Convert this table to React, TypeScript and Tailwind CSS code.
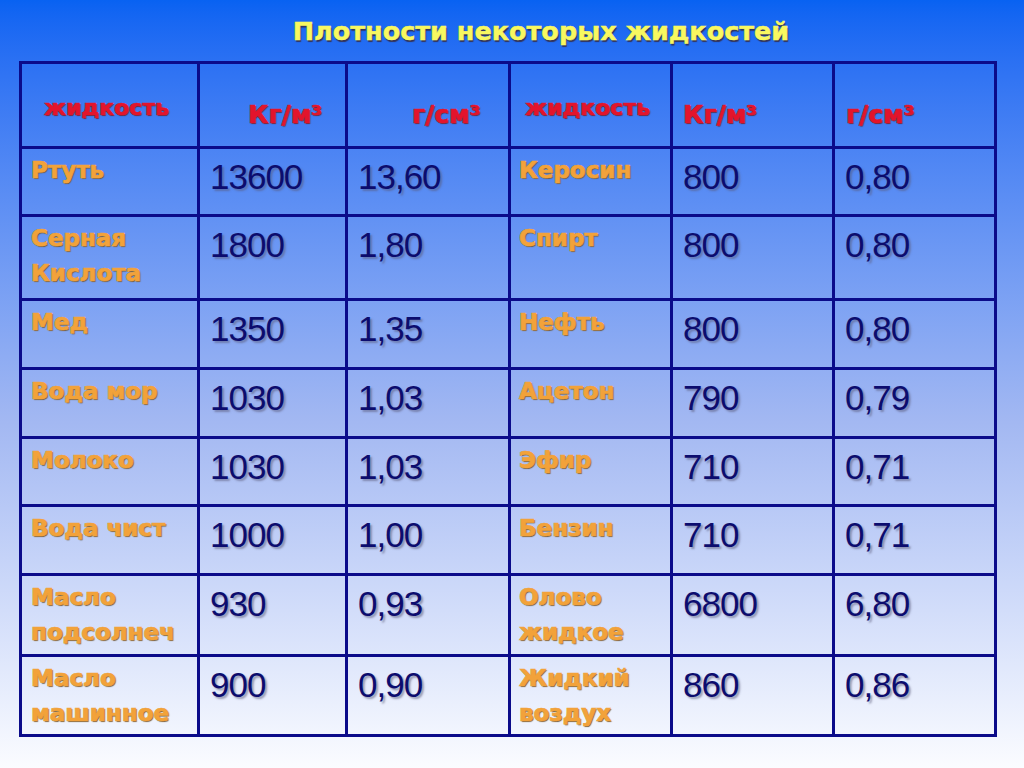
const rows = [
  ['Ртуть', '13600', '13,60', 'Керосин', '800', '0,80'],
  ['Серная Кислота', '1800', '1,80', 'Спирт', '800', '0,80'],
  ['Мед', '1350', '1,35', 'Нефть', '800', '0,80'],
  ['Вода мор', '1030', '1,03', 'Ацетон', '790', '0,79'],
  ['Молоко', '1030', '1,03', 'Эфир', '710', '0,71'],
  ['Вода чист', '1000', '1,00', 'Бензин', '710', '0,71'],
  ['Масло подсолнеч', '930', '0,93', 'Олово жидкое', '6800', '6,80'],
  ['Масло машинное', '900', '0,90', 'Жидкий воздух', '860', '0,86'],
]

const cell = 'border-l-[3px] border-t-[3px] border-[#0b0b8a]'
const nameCls =
  'font-["DejaVu_Sans",sans-serif] font-bold text-[23px] leading-[35px] text-[#f2a23a] [-webkit-text-stroke:0.7px_#f2a23a] [text-shadow:1px_1px_1px_#6b5a3a] pr-1'
const numCls =
  'font-["Liberation_Sans",sans-serif] text-[35px] leading-[40px] tracking-[-1px] text-[#0c0c6e] [text-shadow:2px_2px_2px_rgba(90,90,120,0.55)]'
const headCls =
  'font-["DejaVu_Sans",sans-serif] font-bold text-[#e3142c] [-webkit-text-stroke:0.6px_#e3142c] [text-shadow:1px_1px_1px_#5a2a3a]'

export default function App() {
  return (
    <div className="w-[1024px] h-[768px] bg-linear-to-b from-[#0862f2] via-[#a3b8f2] via-55% to-[#fbfcff] overflow-hidden">
      {/* Title */}
      <div className="flex justify-center pl-[58px] pt-[15px] h-[61px]">
        <h1 className='font-["DejaVu_Sans",sans-serif] font-bold text-[25.5px] leading-[32px] text-[#f8f860] [-webkit-text-stroke:0.5px_#f8f860] [text-shadow:1px_2px_1px_#33335a]'>
          Плотности некоторых жидкостей
        </h1>
      </div>

      {/* Table */}
      <div className="ml-[19px] grid grid-cols-[178px_148px_163px_162px_162px_165px] grid-rows-[85px_68px_84px_69px_69px_68px_69px_81px_83px]">
        <div className={`${cell} pl-[22px] pt-[27px]`}>
          <span className={`${headCls} text-[22px]`}>жидкость</span>
        </div>
        <div className={`${cell} pl-[48px] pt-[37px]`}>
          <span className={`${headCls} text-[25px] leading-[28px]`}>Кг/м³</span>
        </div>
        <div className={`${cell} pl-[64px] pt-[37px]`}>
          <span className={`${headCls} text-[25px] leading-[28px]`}>г/см³</span>
        </div>
        <div className={`${cell} pl-[14px] pt-[27px]`}>
          <span className={`${headCls} text-[22px]`}>жидкость</span>
        </div>
        <div className={`${cell} pl-[10px] pt-[37px]`}>
          <span className={`${headCls} text-[25px] leading-[28px]`}>Кг/м³</span>
        </div>
        <div className={`${cell} border-r-[3px] pl-[11px] pt-[37px]`}>
          <span className={`${headCls} text-[25px] leading-[28px]`}>г/см³</span>
        </div>

        {rows.map((r, i) => {
          const last = i === rows.length - 1 ? 'border-b-[3px]' : ''
          return [
            <div key={`${i}a`} className={`${cell} ${last} pl-[9px] pt-[4px]`}>
              <div className={nameCls}>{r[0]}</div>
            </div>,
            <div key={`${i}b`} className={`${cell} ${last} pl-[10px] pt-[8px]`}>
              <div className={numCls}>{r[1]}</div>
            </div>,
            <div key={`${i}c`} className={`${cell} ${last} pl-[10px] pt-[8px]`}>
              <div className={numCls}>{r[2]}</div>
            </div>,
            <div key={`${i}d`} className={`${cell} ${last} pl-[8px] pt-[4px]`}>
              <div className={nameCls}>{r[3]}</div>
            </div>,
            <div key={`${i}e`} className={`${cell} ${last} pl-[10px] pt-[8px]`}>
              <div className={numCls}>{r[4]}</div>
            </div>,
            <div key={`${i}f`} className={`${cell} ${last} border-r-[3px] pl-[10px] pt-[8px]`}>
              <div className={numCls}>{r[5]}</div>
            </div>,
          ]
        })}
      </div>
    </div>
  )
}
